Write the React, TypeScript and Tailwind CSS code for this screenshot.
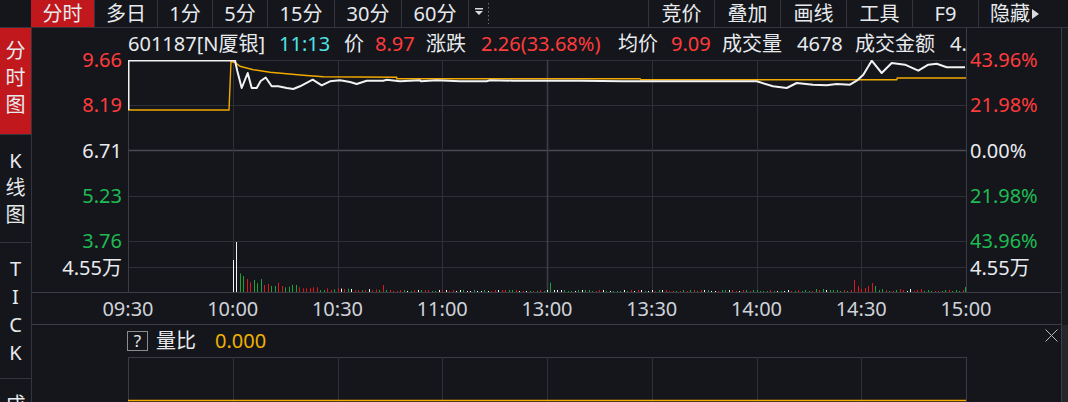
import React from 'react';

const WHITE = '#f2f2f2';
const AVG = '#f2a900';
const GRID = '#2d3036';

const STEP = 838 / 240;

// white price line, taken from the screen (absolute px)
const pricePts: [number, number][] = [
  [128.5, 110], [128.5, 60.5], [235, 60.5], [237.3, 71], [241.7, 88], [247.7, 73], [251.7, 88],
  [256.7, 88], [260.7, 81], [265.7, 77.5], [271.7, 86.3], [278.3, 86.3], [286.7, 88], [293.3, 89],
  [300, 86.3], [312.7, 79.7], [321.7, 85.3], [330, 81.3], [340, 80.3], [350, 82], [356.7, 84],
  [366.7, 80.7], [383.3, 80.7], [386.7, 79.7], [400, 81.3], [420, 80.3], [421, 81.3], [436.7, 80.3],
  [460, 81.3], [486.7, 81.3], [490, 80.3], [513.3, 80.7], [580, 80.7], [623, 81.3], [756.7, 81.3],
  [773, 86.3], [786.7, 88], [796.7, 83], [813, 84.7], [826.7, 85.3], [836.7, 84], [850, 84.7],
  [856.7, 80.7], [863.3, 74.7], [871.7, 60.7], [881.7, 73], [891.7, 63], [905, 64.7], [918.3, 70.7],
  [928.3, 64.7], [936.7, 63.7], [946.7, 67.3], [965, 67.3],
];

const avgPts: [number, number][] = [
  [128, 110], [229, 110], [231, 61.5], [235, 62.5], [240, 66.3], [253.3, 69.7], [270, 72.3],
  [303.3, 75.3], [323.3, 76.7], [396.7, 77.3], [396.7, 78.7], [640, 78.7], [640.7, 79.7],
  [896.7, 79.7], [897.3, 78], [966, 78],
];

const toPoints = (pts: [number, number][]) =>
  pts.map(([x, y]) => `${(x - 128).toFixed(1)},${(y - 60).toFixed(1)}`).join(' ');

type Bar = { i: number; h: number; c: string };

// 10:00 - 10:30, read off the screenshot
const opening: [number, string][] = [
  [32, 'w'], [50, 'w'], [18.5, 'g'], [16, 'g'], [13, 'r'], [9.7, 'r'], [12, 'g'], [8.7, 'g'],
  [13, 'g'], [7, 'r'], [8, 'r'], [6, 'g'], [6, 'g'], [9.3, 'r'], [6, 'r'], [4.7, 'g'], [5.3, 'g'],
  [7, 'g'], [7, 'g'], [4.7, 'r'], [3.7, 'r'], [3.7, 'r'], [3.7, 'r'], [4.7, 'r'], [4.7, 'r'],
  [2, 'g'], [2, 'g'], [3.7, 'r'], [2, 'r'], [2.7, 'g'], [3.7, 'r'],
];

const overrides: Record<number, [number, string]> = {
  73: [7, 'r'],
  121: [9.3, 'g'],
  208: [12, 'r'],
  209: [6, 'r'],
  210: [3, 'r'],
  211: [4, 'r'],
  212: [6, 'r'],
  213: [9, 'r'],
  214: [6, 'g'],
  240: [5, 'g'],
};

function buildBars(): Bar[] {
  let s = 91;
  const rand = () => {
    s = (s * 16807) % 2147483647;
    return s / 2147483647;
  };
  const out: Bar[] = [];
  opening.forEach(([h, c], k) => out.push({ i: 30 + k, h, c }));
  for (let i = 61; i <= 240; i++) {
    const r = rand();
    let c = 'g';
    if (i < 121) c = r < 0.35 ? 'w' : r < 0.7 ? 'g' : 'r';
    else if (i < 181) c = r < 0.45 ? 'w' : r < 0.75 ? 'g' : 'r';
    else c = r < 0.12 ? 'w' : r < 0.55 ? 'g' : 'r';
    let h = i < 72 ? 1.5 + rand() * 2 : 1 + Math.round(rand() * 1.2);
    if (i > 196 && i < 232 && rand() > 0.6) h += 1;
    if (overrides[i]) {
      h = overrides[i][0];
      c = overrides[i][1];
    }
    out.push({ i, h, c });
  }
  return out;
}

const bars = buildBars();
const barColor = (c: string) => (c === 'r' ? '#e0161b' : c === 'g' ? '#1aa33a' : '#f4f4f4');

const gridX = [0, 1, 2, 3, 4, 5, 6, 7].map((k) => Math.round(k * 104.75) + 0.5);

function PriceChart() {
  return (
    <svg width={838} height={232} className="block">
      {[0.5, 45.5, 136.5, 181.5, 207.5].map((y) => (
        <line key={y} x1={0} x2={838} y1={y} y2={y} stroke={GRID} strokeWidth={1} />
      ))}
      <line x1={0} x2={838} y1={90.5} y2={90.5} stroke="#484b51" strokeWidth={1.6} />
      {gridX.map((x, k) => (
        <line
          key={x}
          x1={x}
          x2={x}
          y1={0}
          y2={232}
          stroke={k === 4 ? '#3b3e44' : k === 0 ? '#3a3d43' : GRID}
          strokeWidth={k === 4 ? 1.6 : 1}
        />
      ))}
      {bars.map((b) => (
        <rect
          key={b.i}
          x={Math.min(Math.round(b.i * STEP), 837)}
          y={232 - b.h}
          width={1}
          height={b.h}
          fill={barColor(b.c)}
        />
      ))}
      <polyline points={toPoints(avgPts)} fill="none" stroke={AVG} strokeWidth={1.4} />
      <polyline points={toPoints(pricePts)} fill="none" stroke={WHITE} strokeWidth={2} strokeLinejoin="round" />
    </svg>
  );
}

function RatioChart() {
  return (
    <svg width={839} height={45} className="block">
      <line x1={0} x2={839} y1={0.5} y2={0.5} stroke="#3a3d43" />
      {[...gridX, 838.5].map((x, k) => (
        <line key={k} x1={x} x2={x} y1={0} y2={45} stroke={k === 8 || k === 0 ? '#3a3d43' : GRID} />
      ))}
      <line x1={0} x2={838} y1={43.5} y2={43.5} stroke={AVG} strokeWidth={1.5} />
    </svg>
  );
}

export default function App() {
  const times = ['09:30', '10:00', '10:30', '11:00', '13:00', '13:30', '14:00', '14:30', '15:00'];

  return (
    <div className="w-[1068px] h-[402px] overflow-hidden bg-[#14161b] text-[#e8eaee] font-[family-name:'Noto_Sans','Noto_Sans_CJK_SC',sans-serif] text-[20px] flex flex-col">
      {/* toolbar */}
      <div className="flex h-[28px] shrink-0 border-b border-[#33363c] leading-[27px] whitespace-nowrap">
        <div className="w-[31px]" />
        <div className="w-[64px] bg-[#c0181c] text-center border-r border-[#33363c]">分时</div>
        <div className="w-[63px] text-center border-r border-[#33363c]">多日</div>
        <div className="w-[55px] text-center border-r border-[#33363c]">1分</div>
        <div className="w-[55px] text-center border-r border-[#33363c]">5分</div>
        <div className="w-[67px] text-center border-r border-[#33363c]">15分</div>
        <div className="w-[67px] text-center border-r border-[#33363c]">30分</div>
        <div className="w-[67px] text-center border-r border-[#33363c]">60分</div>
        <div className="w-[22px] flex items-start">
          <svg width={22} height={27}>
            <rect x={6} y={8} width={8} height={1.5} fill="#d8dade" />
            <polygon points="6,11 14,11 10,15" fill="#d8dade" />
            <line x1={19.5} x2={19.5} y1={3} y2={24} stroke="#6a6d72" strokeDasharray="1.5 2.5" />
          </svg>
        </div>
        <div className="flex-1" />
        <div className="w-[66px] text-center border-l border-[#33363c]">竞价</div>
        <div className="w-[66px] text-center border-l border-[#33363c]">叠加</div>
        <div className="w-[66px] text-center border-l border-[#33363c]">画线</div>
        <div className="w-[66px] text-center border-l border-[#33363c]">工具</div>
        <div className="w-[66px] text-center border-l border-[#33363c]">F9</div>
        <div className="w-[90px] pl-[11px] border-l border-[#33363c] flex items-center">
          <span>隐藏</span>
          <svg width={9} height={12} className="ml-[1px]">
            <polygon points="1,1 8,6 1,11" fill="#d8dade" />
          </svg>
        </div>
      </div>

      <div className="flex flex-1 min-h-0">
        {/* side tabs */}
        <div className="w-[32px] shrink-0 border-r border-[#33363c] flex flex-col text-center overflow-hidden">
          <div className="h-[107px] shrink-0 pt-[9px] leading-[27px] bg-[#c0181c] border-b border-[#33363c]">
            <div>分</div>
            <div>时</div>
            <div>图</div>
          </div>
          <div className="h-[108px] shrink-0 pt-[12px] leading-[27px] border-b border-[#33363c]">
            <div>K</div>
            <div>线</div>
            <div>图</div>
          </div>
          <div className="h-[136px] shrink-0 pt-[12px] leading-[28px] border-b border-[#33363c]">
            <div>T</div>
            <div>I</div>
            <div>C</div>
            <div>K</div>
          </div>
          <div className="shrink-0 pt-[12px] leading-[28px]">
            <div>成</div>
          </div>
        </div>

        {/* main */}
        <div className="w-[1030px] shrink-0 border-r border-[#3a3d43] flex flex-col">
          <div className="flex h-[265px] shrink-0 border-b border-[#3a3d43]">
            <div className="w-[96px] shrink-0 flex flex-col items-end pr-[6px] pt-[21px] leading-[22px]">
              <div className="h-[45.25px] text-[#ff3b3b]">9.66</div>
              <div className="h-[45.25px] text-[#ff3b3b]">8.19</div>
              <div className="h-[45.25px] text-[#e8eaee]">6.71</div>
              <div className="h-[45.25px] text-[#1fba52]">5.23</div>
              <div className="h-[27px] text-[#1fba52]">3.76</div>
              <div className="text-[#e8eaee]">4.55万</div>
            </div>
            <div className="w-[838px] shrink-0 flex flex-col overflow-hidden">
              <div className="h-[32px] flex items-center whitespace-nowrap leading-[32px]">
                <span className="w-[151px] shrink-0">601187[N厦银]</span>
                <span className="w-[65px] shrink-0 text-[#4fe3e6]">11:13</span>
                <span className="w-[31px] shrink-0">价</span>
                <span className="w-[51px] shrink-0 text-[#ff3b3b]">8.97</span>
                <span className="w-[55px] shrink-0">涨跌</span>
                <span className="w-[137px] shrink-0 text-[#ff3b3b]">2.26(33.68%)</span>
                <span className="w-[53px] shrink-0">均价</span>
                <span className="w-[51px] shrink-0 text-[#ff3b3b]">9.09</span>
                <span className="w-[75px] shrink-0">成交量</span>
                <span className="w-[58px] shrink-0">4678</span>
                <span className="w-[95px] shrink-0">成交金额</span>
                <span className="shrink-0">4.</span>
              </div>
              <PriceChart />
            </div>
            <div className="w-[95px] shrink-0 border-l border-[#3a3d43] flex flex-col pl-[3px] pt-[21px] leading-[22px]">
              <div className="h-[45.25px] text-[#ff3b3b]">43.96%</div>
              <div className="h-[45.25px] text-[#ff3b3b]">21.98%</div>
              <div className="h-[45.25px] text-[#e8eaee]">0.00%</div>
              <div className="h-[45.25px] text-[#1fba52]">21.98%</div>
              <div className="h-[27px] text-[#1fba52]">43.96%</div>
              <div className="text-[#e8eaee]">4.55万</div>
            </div>
          </div>

          {/* time axis */}
          <div className="h-[32px] shrink-0 border-b border-[#3a3d43] flex items-center pl-[43.6px] text-[#cfd3d9] leading-[31px]">
            {times.map((t) => (
              <div key={t} className="w-[104.75px] shrink-0 text-center">
                {t}
              </div>
            ))}
          </div>

          {/* 量比 panel */}
          <div className="flex-1 flex flex-col">
            <div className="h-[32px] shrink-0 flex items-center pl-[95px]">
              <div className="w-[21px] h-[20px] border border-[#8a8c90] text-[17px] leading-[18px] text-center text-[#e8eaee]">
                ?
              </div>
              <span className="ml-[8px]">量比</span>
              <span className="ml-[19px] text-[#f0b000]">0.000</span>
              <svg width={13} height={13} className="ml-auto mr-[3px] self-start mt-[4px]">
                <line x1={0.5} y1={0.5} x2={12.5} y2={12.5} stroke="#b4b6ba" />
                <line x1={12.5} y1={0.5} x2={0.5} y2={12.5} stroke="#b4b6ba" />
              </svg>
            </div>
            <div className="pl-[96px]">
              <RatioChart />
            </div>
          </div>
        </div>

        {/* right edge strip */}
        <div className="flex-1 flex flex-col">
          <div className="h-[297px] bg-[#191a1f]" />
          <div className="flex-1 bg-[#26272c]" />
        </div>
      </div>
    </div>
  );
}
